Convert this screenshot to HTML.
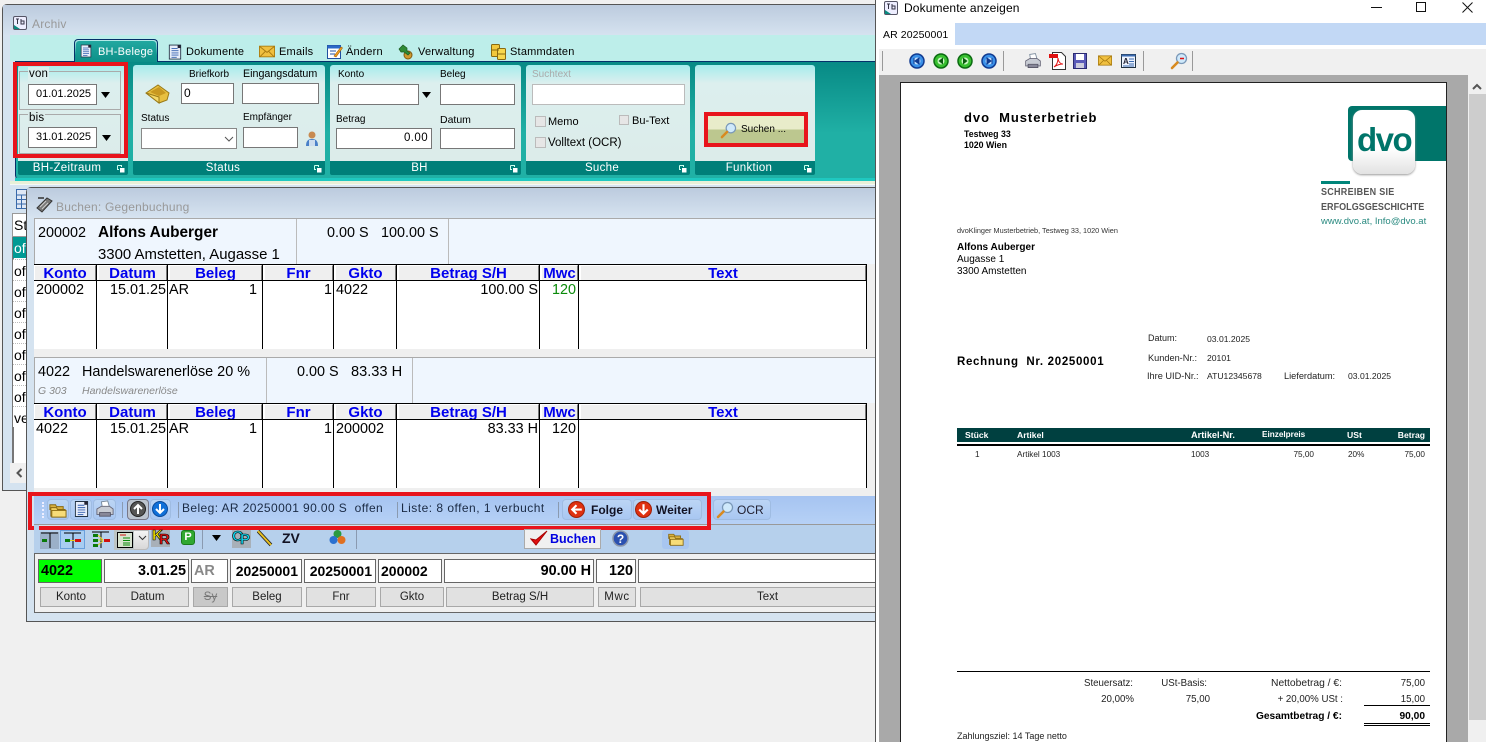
<!DOCTYPE html>
<html lang="de"><head><meta charset="utf-8"><title>Archiv</title>
<style>
html{margin:0;padding:0;background:#f0f0f0;overflow:hidden;width:1486px;height:742px}
body{margin:0;padding:0;background:#f0f0f0}
#root{position:absolute;left:0;top:0;width:1486px;height:742px;overflow:hidden;font-family:"Liberation Sans",sans-serif;color:#000}
div,svg,span.t{position:absolute;box-sizing:border-box}
.t{position:absolute;line-height:14px;white-space:nowrap;font-size:12px}
.g{color:#999}
.in{background:#fff;border:1px solid #777}
.grp{background:linear-gradient(#a6ecec 0,#dcefee 18px,#dcecea 100%);border-radius:3px 3px 0 0}
.ft{background:#007f79;color:#fff;height:14px;text-align:center;font-size:11.5px;line-height:15px;letter-spacing:.3px;border-radius:0 0 2px 2px;padding-right:12px}
.rb{border:4px solid #e8141c;background:transparent}
.hc{background:#efefef;overflow:hidden;color:#0000ee;font-weight:bold;font-size:15px;line-height:15px;text-align:center;border-right:1px solid #777;border-left:1px solid #fff;border-top:1px solid #fff}
.v{background:#000;width:1px;top:0;height:85px}
.c{font-size:14.4px;top:19px;line-height:14px;white-space:nowrap;position:absolute}
.l{background:#e1e1e1;border:1px solid #a8a8a8;text-align:center;font-size:11.5px;line-height:19px;height:20px;top:587px;color:#222}
.e{background:#fff;border:1px solid #666;height:24px;top:559px;font-weight:bold;font-size:14.4px;line-height:22px;white-space:nowrap;padding:0 2px}
.r{text-align:right}
.p{font-size:8.6px;color:#222;line-height:12px}
.f{font-size:9.7px;color:#222;line-height:12px}
.btn{background:linear-gradient(#bcd5f5,#a9c7f2);border:1px solid #9fbce2;border-radius:4px}
.sep{width:1px;background:#f4f8ff;border-left:1px solid #8a9ab0}
.rw{border-top:1px dotted #bbb;left:13px;width:13px;height:21px;font-size:14px;line-height:22px;overflow:hidden;padding-left:1px;background:#fff}
.tab{top:45px;font-size:11px;letter-spacing:.22px}
</style></head><body><div id="root">
<svg width="0" height="0" style="position:absolute"><defs>
<symbol id="app" viewBox="0 0 14 14"><rect x=".5" y=".5" width="13" height="13" rx="1.5" fill="#eef" stroke="#556"/><path d="M1 9 L7 13H1Z" fill="#0a8a80"/><path d="M3 3h3M4.5 3v5M8 3v5h3V5H8" stroke="#334" fill="none"/></symbol>
<symbol id="folder" viewBox="0 0 20 20"><path d="M2 5h6l1 2h7v3H2Z" fill="#d8b040" stroke="#8a6a10"/><path d="M3 8h6l1 2h8v7H3Z" fill="#f0cf60" stroke="#8a6a10"/><path d="M4 11h15v7H4Z" fill="#f7dc78" stroke="#8a6a10"/></symbol>
<symbol id="doc" viewBox="0 0 16 18"><path d="M1.5 1h13v16h-13Z" fill="#e8eefa" stroke="#234"/><path d="M11 1h3.5v3.500H11Z" fill="#223"/><path d="M4 5h7M4 7.500h8M4 10h8M4 12.500h8M4 15h6" stroke="#3460b0"/></symbol>
<symbol id="printer" viewBox="0 0 22 20"><path d="M7 2l7-1 2 7H8Z" fill="#fff" stroke="#789"/><path d="M2 10l5-3h9l4 3v6H2Z" fill="#c8ccd4" stroke="#667"/><path d="M5 14h12v4H5Z" fill="#889" stroke="#556"/></symbol>
<symbol id="mag" viewBox="0 0 18 18"><circle cx="11.500" cy="6.500" r="5" fill="#cfe9fb" stroke="#7a98b8" stroke-width="1.300"/><path d="M7.500 10.500 2 16" stroke="#d88a20" stroke-width="2.600" stroke-linecap="round"/></symbol>
<symbol id="mail" viewBox="0 0 18 14"><rect x=".5" y="1" width="17" height="12" fill="#f0c040" stroke="#a87a10"/><path d="M1 1.500 9 8l8-6.500M1 13l6-6M17 13l-6-6" fill="none" stroke="#a87a10"/></symbol>
<symbol id="dl" viewBox="0 0 8 8"><path d="M.5.500h4v1.500M.5.500v4H2" fill="none" stroke="#cfe"/><rect x="3" y="3" width="4.500" height="4.500" fill="#fff"/></symbol>
</defs></svg>

<!-- Archiv window -->
<div style="left:2px;top:4px;width:874px;height:487px;border:1px solid #555;border-radius:5px 0 0 0;background:#d5e3f0"></div>
<div style="left:3px;top:5px;width:872px;height:31px;background:linear-gradient(#bccbde,#d6e3f0)"></div>
<svg style="left:13px;top:16px" width="14" height="14"><use href="#app"/></svg>
<span class="t g" style="left:32px;top:17px;letter-spacing:.2px">Archiv</span>
<div style="left:10px;top:35px;width:865px;height:26px;background:#bdeeea"></div>
<div style="left:15px;top:61px;width:860px;height:120px;background:linear-gradient(#078a85,#20b0a5 60%);border-top:1px solid #05306a;border-left:1px solid #05306a;border-radius:0 0 0 6px"></div>
<div style="left:15px;top:178px;width:860px;height:3px;background:#1fc8c0"></div>
<div style="left:10px;top:181px;width:865px;height:3px;background:#e8f0d8"></div>
<div style="left:10px;top:184px;width:865px;height:1px;background:#f4f8f4"></div>

<!-- Tabs -->
<div style="left:74px;top:39px;width:84px;height:23px;background:linear-gradient(#b8ecea,#10968f 70%);border:1px solid #05306a;border-bottom:0;border-radius:4px 4px 0 0"></div>
<div style="left:76px;top:41px;width:80px;height:21px;background:linear-gradient(#22a8a0,#0c8f88);border-radius:3px 3px 0 0"></div>
<svg style="left:80px;top:43px" width="12" height="16"><use href="#doc"/></svg>
<span class="t tab" style="left:98px;color:#fff">BH-Belege</span>
<svg style="left:168px;top:44px" width="14" height="16"><use href="#doc"/></svg>
<span class="t tab" style="left:186px">Dokumente</span>
<svg style="left:259px;top:45px" width="16" height="13"><use href="#mail"/></svg>
<span class="t tab" style="left:279px">Emails</span>
<svg style="left:327px;top:44px" width="16" height="15" viewBox="0 0 16 15"><rect x=".5" y="1.500" width="13" height="13" fill="#fff" stroke="#2050a0"/><rect x=".5" y="1.500" width="13" height="3" fill="#2a68c8"/><path d="M3 7h6M3 10h5" stroke="#2050a0"/><path d="M7 12 14 3l1.500 1L9 13Z" fill="#f0a020" stroke="#a05a00" stroke-width=".6"/></svg>
<span class="t tab" style="left:346px">Ändern</span>
<svg style="left:398px;top:44px" width="17" height="16" viewBox="0 0 17 16"><circle cx="10" cy="11" r="4" fill="#d09a30" stroke="#805a10"/><path d="M1 5 5 1l4 3v3l3 2-2 2-4-3H3Z" fill="#2f8a35" stroke="#1a5a20" stroke-width=".7"/></svg>
<span class="t tab" style="left:418px">Verwaltung</span>
<svg style="left:491px;top:44px" width="15" height="16" viewBox="0 0 15 16"><rect x=".5" y=".5" width="8" height="12" rx="1" fill="#f2c83c" stroke="#8a6a10"/><rect x="6.500" y="4.500" width="8" height="11" rx="1" fill="#f8d84c" stroke="#8a6a10"/><path d="M1 6h7M7 10h7" stroke="#8a6a10"/></svg>
<span class="t tab" style="left:510px">Stammdaten</span>

<!-- BH-Zeitraum -->
<div class="grp" style="left:18px;top:65px;width:110px;height:96px"></div>
<div class="ft" style="left:18px;top:161px;width:110px">BH-Zeitraum</div>
<svg style="left:117px;top:165px" width="8" height="8"><use href="#dl"/></svg>
<div style="left:19px;top:71px;width:102px;height:39px;border:1px solid #aaa"></div>
<span class="t" style="left:28px;top:67px;font-size:11.500px;background:#dcefee;padding:0 1px;letter-spacing:.2px">von</span>
<div class="in" style="left:28px;top:84px;width:69px;height:21px"></div>
<span class="t" style="left:36px;top:87px;font-size:11px">01.01.2025</span>
<svg style="left:101px;top:92px" width="9" height="6"><path d="M0 0h9L4.500 6Z"/></svg>
<div style="left:19px;top:114px;width:102px;height:40px;border:1px solid #aaa"></div>
<span class="t" style="left:28px;top:111px;font-size:11.500px;background:#dcecea;padding:0 1px;letter-spacing:.2px">bis</span>
<div class="in" style="left:28px;top:127px;width:69px;height:21px"></div>
<span class="t" style="left:36px;top:130px;font-size:11px">31.01.2025</span>
<svg style="left:102px;top:135px" width="9" height="6"><path d="M0 0h9L4.500 6Z"/></svg>
<div class="rb" style="left:13px;top:62px;width:115px;height:96px"></div>

<!-- Status -->
<div class="grp" style="left:133px;top:65px;width:192px;height:96px"></div>
<div class="ft" style="left:133px;top:161px;width:192px">Status</div>
<svg style="left:314px;top:165px" width="8" height="8"><use href="#dl"/></svg>
<svg style="left:145px;top:84px" width="25" height="20" viewBox="0 0 25 20"><path d="M1 9 13 1l11 8-2 7-8 3Z" fill="#e8c040" stroke="#9a7a18"/><path d="M5 8l9-5 7 6-7 3Z" fill="#c89820"/><path d="M1 9l13 4v6Z" fill="#f4d868" stroke="#9a7a18"/></svg>
<span class="t" style="left:189px;top:68px;font-size:10px">Briefkorb</span>
<div class="in" style="left:181px;top:83px;width:53px;height:21px"></div>
<span class="t" style="left:184px;top:86px;font-size:12px">0</span>
<span class="t" style="left:243px;top:67px;font-size:10.700px">Eingangsdatum</span>
<div class="in" style="left:242px;top:83px;width:77px;height:21px"></div>
<span class="t" style="left:141px;top:112px;font-size:10px">Status</span>
<div class="in" style="left:141px;top:128px;width:96px;height:21px;border-color:#888"></div>
<svg style="left:224px;top:136px" width="10" height="6"><path d="M1 1l4 4 4-4" fill="none" stroke="#555"/></svg>
<span class="t" style="left:243px;top:111px;font-size:10px">Empfänger</span>
<div class="in" style="left:243px;top:127px;width:55px;height:21px"></div>
<svg style="left:305px;top:131px" width="14" height="16" viewBox="0 0 14 16"><circle cx="7" cy="4" r="3.500" fill="#c88a50"/><path d="M1 15c0-5 2-7 6-7s6 2 6 7Z" fill="#4a80c8"/><rect x="4" y="9" width="6" height="6" fill="#cde"/></svg>

<!-- BH -->
<div class="grp" style="left:330px;top:65px;width:191px;height:96px"></div>
<div class="ft" style="left:330px;top:161px;width:191px">BH</div>
<svg style="left:510px;top:165px" width="8" height="8"><use href="#dl"/></svg>
<span class="t" style="left:338px;top:68px;font-size:10px">Konto</span>
<div class="in" style="left:338px;top:84px;width:81px;height:21px"></div>
<svg style="left:422px;top:92px" width="9" height="6"><path d="M0 0h9L4.500 6Z"/></svg>
<span class="t" style="left:336px;top:113px;font-size:10px">Betrag</span>
<div class="in" style="left:336px;top:128px;width:96px;height:21px"></div>
<span class="t" style="right:1058px;top:131px;font-size:11.500px;letter-spacing:.4px">0.00</span>
<span class="t" style="left:440px;top:68px;font-size:10px">Beleg</span>
<div class="in" style="left:440px;top:84px;width:75px;height:21px"></div>
<span class="t" style="left:440px;top:113px;font-size:10.500px">Datum</span>
<div class="in" style="left:440px;top:128px;width:75px;height:21px"></div>

<!-- Suche -->
<div class="grp" style="left:526px;top:65px;width:164px;height:96px"></div>
<div class="ft" style="left:526px;top:161px;width:164px">Suche</div>
<svg style="left:679px;top:165px" width="8" height="8"><use href="#dl"/></svg>
<span class="t" style="left:532px;top:68px;font-size:10px;color:#aaa">Suchtext</span>
<div class="in" style="left:532px;top:84px;width:153px;height:21px;border-color:#bbb"></div>
<div style="left:535px;top:116px;width:11px;height:11px;background:#e6e6e6;border:1px solid #bbb"></div>
<span class="t" style="left:548px;top:115px;font-size:11px">Memo</span>
<div style="left:619px;top:115px;width:10px;height:10px;background:#e6e6e6;border:1px solid #bbb"></div>
<span class="t" style="left:632px;top:114px;font-size:11px">Bu-Text</span>
<div style="left:535px;top:137px;width:11px;height:11px;background:#e6e6e6;border:1px solid #bbb"></div>
<span class="t" style="left:548px;top:136px;font-size:11.500px">Volltext (OCR)</span>

<!-- Funktion -->
<div class="grp" style="left:695px;top:65px;width:120px;height:96px"></div>
<div class="ft" style="left:695px;top:161px;width:120px">Funktion</div>
<svg style="left:804px;top:165px" width="8" height="8"><use href="#dl"/></svg>
<div style="left:708px;top:116px;width:96px;height:27px;background:linear-gradient(#e8ecca 50%,#bcc78f 50%)"></div>
<svg style="left:720px;top:122px" width="17" height="17"><use href="#mag"/></svg>
<span class="t" style="left:741px;top:123px;font-size:10px">Suchen ...</span>
<div class="rb" style="left:704px;top:112px;width:104px;height:35px"></div>

<!-- left list behind -->
<svg style="left:16px;top:189px" width="11" height="20"><rect x=".5" y=".5" width="11" height="19" fill="#dfe8f6" stroke="#3a6aaa"/><path d="M0 6h11M0 10.500h11M0 15h11M5.500 6v14" stroke="#3a6aaa"/></svg>
<div style="left:12px;top:213px;width:15px;height:24px;background:#fff;border:1px solid #999"></div>
<span class="t" style="left:14px;top:218px;font-size:14px">St</span>
<div style="left:12px;top:237px;width:15px;height:226px;background:#fff;border-left:2px solid #777"></div>
<div class="rw" style="top:237px;background:#009a94;color:#fff;border:0">of</div>
<div class="rw" style="top:259px">of</div><div class="rw" style="top:280px">of</div><div class="rw" style="top:301px">of</div><div class="rw" style="top:322px">of</div><div class="rw" style="top:343px">of</div><div class="rw" style="top:364px">of</div><div class="rw" style="top:385px">of</div><div class="rw" style="top:406px">ve</div>
<div style="left:10px;top:463px;width:17px;height:20px;background:#f0f0f0"></div>
<svg style="left:16px;top:468px" width="7" height="10"><path d="M5.500 1 1.500 5l4 4" fill="none" stroke="#555" stroke-width="2"/></svg>

<!-- Buchen window -->
<div style="left:26px;top:187px;width:850px;height:435px;border:1px solid #555;border-radius:5px 0 0 0;background:#d5e3f0"></div>
<div style="left:27px;top:188px;width:848px;height:30px;background:linear-gradient(#bccbde,#d6e3f0)"></div>
<svg style="left:36px;top:196px" width="17" height="17" viewBox="0 0 17 17"><path d="M2 2h6" stroke="#333" stroke-width="1.500"/><path d="M1 12 11 2l5 3L6 16Z" fill="#777" stroke="#333"/><path d="M4 11l6-6M6 13l6-6" stroke="#ccc"/></svg>
<span class="t g" style="left:56px;top:200px;font-size:12px;letter-spacing:.2px">Buchen: Gegenbuchung</span>

<!-- panel 1 -->
<div style="left:34px;top:218px;width:841px;height:46px;background:#eff6fe;border-top:1px solid #aaa"></div>
<div style="left:34px;top:219px;width:1px;height:45px;background:#aaa"></div>
<div style="left:296px;top:219px;width:1px;height:45px;background:#bbb"></div>
<div style="left:448px;top:219px;width:1px;height:45px;background:#bbb"></div>
<span class="t" style="left:38px;top:226px;font-size:14.400px">200002</span>
<span class="t" style="left:98px;top:226px;font-size:15.400px;font-weight:bold">Alfons Auberger</span>
<span class="t" style="left:98px;top:248px;font-size:14.950px">3300 Amstetten, Augasse 1</span>
<span class="t" style="left:327px;top:226px;font-size:14.400px">0.00 S</span>
<span class="t" style="left:381px;top:226px;font-size:14.400px">100.00 S</span>
<div style="left:34px;top:349px;width:841px;height:9px;background:#efefef;border-bottom:1px solid #aaa"></div>
<div style="left:866px;top:264px;width:9px;height:85px;background:#efefef"></div>

<!-- table 1 -->
<div style="left:34px;top:264px;width:833px;height:85px;background:#fff">
<div style="left:0;top:0;width:833px;height:1px;background:#000"></div>
<div style="left:0;top:16px;width:833px;height:1px;background:#000"></div>
<div class="hc" style="left:0;top:1px;width:62px;height:15px">Konto</div>
<div class="hc" style="left:64px;top:1px;width:69px;height:15px">Datum</div>
<div class="hc" style="left:135px;top:1px;width:93px;height:15px">Beleg</div>
<div class="hc" style="left:230px;top:1px;width:69px;height:15px">Fnr</div>
<div class="hc" style="left:301px;top:1px;width:61px;height:15px">Gkto</div>
<div class="hc" style="left:364px;top:1px;width:141px;height:15px">Betrag S/H</div>
<div class="hc" style="left:507px;top:1px;width:37px;height:15px">Mwc</div>
<div class="hc" style="left:546px;top:1px;width:286px;height:15px">Text</div>
<div class="v" style="left:62px"></div><div class="v" style="left:133px"></div><div class="v" style="left:228px"></div><div class="v" style="left:299px"></div><div class="v" style="left:362px"></div><div class="v" style="left:505px"></div><div class="v" style="left:544px"></div><div class="v" style="left:832px"></div>
<span class="c" style="left:2px">200002</span><span class="c" style="left:76px">15.01.25</span><span class="c" style="left:135px">AR</span><span class="c" style="right:610px">1</span><span class="c" style="right:535px">1</span><span class="c" style="left:302px">4022</span><span class="c" style="right:329px">100.00 S</span><span class="c" style="right:291px;color:#0a8a0a">120</span>
</div>

<!-- panel 2 -->
<div style="left:34px;top:358px;width:841px;height:45px;background:#eff6fe"></div>
<div style="left:34px;top:358px;width:1px;height:45px;background:#aaa"></div>
<div style="left:266px;top:358px;width:1px;height:45px;background:#bbb"></div>
<div style="left:412px;top:358px;width:1px;height:45px;background:#bbb"></div>
<span class="t" style="left:38px;top:365px;font-size:14.400px">4022</span>
<span class="t" style="left:82px;top:365px;font-size:14.400px">Handelswarenerlöse 20 %</span>
<span class="t" style="left:297px;top:365px;font-size:14.400px">0.00 S</span>
<span class="t" style="left:351px;top:365px;font-size:14.600px">83.33 H</span>
<span class="t" style="left:38px;top:384px;font-size:10.500px;font-style:italic;color:#888">G 303</span>
<span class="t" style="left:82px;top:384px;font-size:10.500px;font-style:italic;color:#888">Handelswarenerlöse</span>
<div style="left:866px;top:403px;width:9px;height:94px;background:#efefef"></div>
<div style="left:34px;top:488px;width:841px;height:9px;background:#efefef"></div>

<!-- table 2 -->
<div style="left:34px;top:403px;width:833px;height:85px;background:#fff">
<div style="left:0;top:0;width:833px;height:1px;background:#000"></div>
<div style="left:0;top:16px;width:833px;height:1px;background:#000"></div>
<div class="hc" style="left:0;top:1px;width:62px;height:15px">Konto</div>
<div class="hc" style="left:64px;top:1px;width:69px;height:15px">Datum</div>
<div class="hc" style="left:135px;top:1px;width:93px;height:15px">Beleg</div>
<div class="hc" style="left:230px;top:1px;width:69px;height:15px">Fnr</div>
<div class="hc" style="left:301px;top:1px;width:61px;height:15px">Gkto</div>
<div class="hc" style="left:364px;top:1px;width:141px;height:15px">Betrag S/H</div>
<div class="hc" style="left:507px;top:1px;width:37px;height:15px">Mwc</div>
<div class="hc" style="left:546px;top:1px;width:286px;height:15px">Text</div>
<div class="v" style="left:62px"></div><div class="v" style="left:133px"></div><div class="v" style="left:228px"></div><div class="v" style="left:299px"></div><div class="v" style="left:362px"></div><div class="v" style="left:505px"></div><div class="v" style="left:544px"></div><div class="v" style="left:832px"></div>
<span class="c" style="left:2px">4022</span><span class="c" style="left:76px">15.01.25</span><span class="c" style="left:135px">AR</span><span class="c" style="right:610px">1</span><span class="c" style="right:535px">1</span><span class="c" style="left:302px">200002</span><span class="c" style="right:329px">83.33 H</span><span class="c" style="right:291px">120</span>
</div>

<!-- toolbar 1 -->
<div style="left:34px;top:496px;width:841px;height:29px;background:linear-gradient(#a6c4f1,#b6d1f6);border-bottom:1px solid #999"></div>
<div style="left:42px;top:502px;width:2px;height:16px;border-left:2px dotted #eef"></div>
<div class="btn" style="left:47px;top:499px;width:22px;height:21px"></div>
<svg style="left:48px;top:500px" width="19" height="19"><use href="#folder"/></svg>
<div class="btn" style="left:70px;top:499px;width:22px;height:21px"></div>
<svg style="left:74px;top:500px" width="15" height="18"><use href="#doc"/></svg>
<div class="btn" style="left:93px;top:499px;width:23px;height:21px"></div>
<svg style="left:95px;top:500px" width="20" height="18"><use href="#printer"/></svg>
<div class="sep" style="left:122px;top:502px;height:16px"></div>
<div style="left:127px;top:499px;width:22px;height:21px;background:#bcc4cf;border:1px solid #778;border-radius:4px"></div>
<svg style="left:130px;top:501px" width="16" height="16" viewBox="0 0 16 16"><circle cx="8" cy="8" r="7.500" fill="#555" stroke="#222"/><path d="M8 13V4M4 8l4-4 4 4" stroke="#fff" stroke-width="2" fill="none"/></svg>
<div class="btn" style="left:150px;top:499px;width:21px;height:21px"></div>
<svg style="left:152px;top:501px" width="16" height="16" viewBox="0 0 16 16"><circle cx="8" cy="8" r="7.500" fill="#1070d8" stroke="#0a4a9a"/><path d="M8 3v9M4 8l4 4 4-4" stroke="#fff" stroke-width="2" fill="none"/></svg>
<div class="sep" style="left:178px;top:502px;height:16px"></div>
<span class="t" style="left:182px;top:501px;color:#1a2a44;letter-spacing:.4px;white-space:pre">Beleg: AR 20250001 90.00 S  offen</span>
<div class="sep" style="left:397px;top:502px;height:16px"></div>
<span class="t" style="left:401px;top:501px;color:#1a2a44;letter-spacing:.48px">Liste: 8 offen, 1 verbucht</span>
<div class="sep" style="left:558px;top:502px;height:16px"></div>
<div class="btn" style="left:562px;top:499px;width:70px;height:21px"></div>
<svg style="left:568px;top:501px" width="17" height="17" viewBox="0 0 16 16"><circle cx="8" cy="8" r="7.500" fill="#e03010" stroke="#a02008"/><path d="M13 8H4M8 4 4 8l4 4" stroke="#fff" stroke-width="2" fill="none"/></svg>
<span class="t" style="left:591px;top:503px;font-weight:bold;color:#112">Folge</span>
<div class="btn" style="left:633px;top:499px;width:69px;height:21px"></div>
<svg style="left:635px;top:501px" width="17" height="17" viewBox="0 0 16 16"><circle cx="8" cy="8" r="7.500" fill="#e03010" stroke="#a02008"/><path d="M8 3v9M4 8l4 4 4-4" stroke="#fff" stroke-width="2" fill="none"/></svg>
<span class="t" style="left:656px;top:503px;font-weight:bold;color:#112">Weiter</span>
<div class="btn" style="left:713px;top:499px;width:58px;height:21px"></div>
<svg style="left:716px;top:501px" width="18" height="18"><use href="#mag"/></svg>
<span class="t" style="left:737px;top:503px;color:#223">OCR</span>
<div class="rb" style="left:28px;top:492px;width:683px;height:38px"></div>

<!-- toolbar 2 -->
<div style="left:34px;top:530px;width:841px;height:23px;background:#b6d0ec"></div>
<div style="left:34px;top:525px;width:5px;height:5px;background:#b6d0ec"></div>
<div style="left:711px;top:525px;width:164px;height:5px;background:#b6d0ec"></div>
<div style="left:40px;top:532px;width:19px;height:17px;background:#9bb0c8"></div>
<svg style="left:40px;top:532px" width="19" height="17"><path d="M1 1h17M10 1v15" stroke="#000" fill="none"/><rect x="2" y="7" width="5" height="3" fill="#0a7a0a"/></svg>
<div style="left:60px;top:530px;width:25px;height:19px;background:#a8cdf2;border:1px solid #6aa0dc"></div>
<svg style="left:64px;top:532px" width="19" height="16"><path d="M0 1h17M9 1v15" stroke="#000" fill="none"/><rect x="1" y="7" width="5" height="3" fill="#0a7a0a"/><rect x="11" y="7" width="6" height="3" fill="#d01010"/><path d="M6 8.500h5" stroke="#e8d020"/></svg>
<svg style="left:92px;top:531px" width="18" height="18"><path d="M0 1h17M9 1v16" stroke="#000" fill="none"/><rect x="1" y="3" width="5" height="3" fill="#0a7a0a"/><rect x="1" y="8" width="5" height="3" fill="#0a7a0a"/><rect x="1" y="13" width="5" height="3" fill="#0a7a0a"/><rect x="12" y="8" width="6" height="3" fill="#d01010"/><path d="M6 4 11 9M6 9h5M6 14l5-4" stroke="#e8d020"/></svg>
<div style="left:114px;top:530px;width:35px;height:20px;background:linear-gradient(#f4f4f4,#d8d8d8);border:1px solid #bbb;border-radius:0 0 4px 4px"></div>
<div style="left:114px;top:530px;width:20px;height:20px;background:#bcc4c4"></div>
<svg style="left:117px;top:532px" width="16" height="16"><rect x=".5" y=".5" width="15" height="15" fill="#d8e4d0" stroke="#000"/><path d="M3 3h6" stroke="#d01010"/><path d="M6 6h7M6 8.500h7M6 11h7M6 13h7" stroke="#0a8a0a"/></svg>
<svg style="left:138px;top:535px" width="9" height="6"><path d="M1 1l3.500 3.500L8 1" fill="none" stroke="#333"/></svg>
<div style="left:151px;top:530px;width:19px;height:17px;background:#a8b0b8"></div>
<span class="t" style="left:152px;top:529px;font-size:15px;font-weight:bold;color:#f8e800;-webkit-text-stroke:.6px #000">K</span>
<span class="t" style="left:159px;top:533px;font-size:15px;font-weight:bold;color:#e81010;-webkit-text-stroke:.6px #000">R</span>
<div style="left:181px;top:530px;width:14px;height:15px;background:#30a830;border:1px solid #1a7a1a;border-radius:3px;color:#fff;font-weight:bold;font-size:11px;text-align:center;line-height:13px">P</div>
<div class="sep" style="left:202px;top:530px;height:19px"></div>
<svg style="left:212px;top:535px" width="9" height="6"><path d="M0 0h9L4.500 6Z"/></svg>
<div style="left:232px;top:530px;width:19px;height:18px;background:#a8b0b8"></div>
<span class="t" style="left:232px;top:530px;font-size:15px;font-weight:bold;color:#10d8f0;-webkit-text-stroke:.6px #000">O</span>
<span class="t" style="left:240px;top:533px;font-size:15px;font-weight:bold;color:#10d8f0;-webkit-text-stroke:.6px #000">P</span>
<svg style="left:257px;top:530px" width="17" height="18"><path d="M1 1l13 14" stroke="#222" stroke-width="3.500"/><path d="M1 1l13 14" stroke="#e8c020" stroke-width="2"/></svg>
<span class="t" style="left:282px;top:531px;font-size:14px;font-weight:bold;color:#112">ZV</span>
<svg style="left:329px;top:529px" width="17" height="17"><circle cx="8.500" cy="5" r="4" fill="#2a9a40"/><circle cx="4.500" cy="11" r="4" fill="#2a70d0"/><circle cx="12.500" cy="11" r="4" fill="#e07020"/></svg>
<div class="sep" style="left:356px;top:530px;height:19px"></div>
<div style="left:524px;top:529px;width:77px;height:20px;background:#f0f0f0;border:1px solid #aaa"></div>
<svg style="left:530px;top:530px" width="18" height="16"><path d="M1 9l5 6L17 1 6 10Z" fill="#e01010" stroke="#a00"/></svg>
<span class="t" style="left:550px;top:532px;font-size:12.500px;font-weight:bold;color:#0000e0">Buchen</span>
<svg style="left:612px;top:530px" width="17" height="17"><circle cx="8.500" cy="8.500" r="7.500" fill="#2a50b0" stroke="#8a95a8" stroke-width="1.500"/><text x="8.500" y="13" text-anchor="middle" font-size="12" font-weight="bold" fill="#fff" font-family="Liberation Sans">?</text></svg>
<div style="left:662px;top:530px;width:27px;height:19px;background:#a8c6f0;border-radius:3px"></div>
<svg style="left:666px;top:530px" width="19" height="17"><use href="#folder"/></svg>

<!-- entry -->
<div style="left:34px;top:553px;width:841px;height:60px;background:#f0f0f0;border-top:1px solid #666;border-bottom:1px solid #666;border-left:1px solid #666"></div>
<div class="e" style="left:38px;width:64px;background:#00ff00">4022</div>
<div class="e r" style="left:104px;width:85px">3.01.25</div>
<div class="e" style="left:191px;width:37px;color:#888">AR</div>
<div class="e r" style="left:230px;width:72px;font-size:14px;padding-right:3px">20250001</div>
<div class="e r" style="left:304px;width:72px;font-size:14px;padding-right:3px">20250001</div>
<div class="e" style="left:378px;width:64px;font-size:14px">200002</div>
<div class="e r" style="left:444px;width:150px">90.00 H</div>
<div class="e r" style="left:596px;width:40px">120</div>
<div class="e" style="left:638px;width:237px;border-right:0"></div>
<div class="l" style="left:40px;width:62px">Konto</div>
<div class="l" style="left:106px;width:83px">Datum</div>
<div class="l" style="left:193px;width:35px;background:#c8c8c8;color:#777;text-decoration:line-through">Sy</div>
<div class="l" style="left:232px;width:70px">Beleg</div>
<div class="l" style="left:306px;width:70px">Fnr</div>
<div class="l" style="left:380px;width:64px">Gkto</div>
<div class="l" style="left:446px;width:148px">Betrag S/H</div>
<div class="l" style="left:598px;width:38px;letter-spacing:.6px">Mwc</div>
<div class="l" style="left:640px;width:254px;border-right:0">Text</div>

<!-- Doc window -->
<div style="left:875px;top:0;width:611px;height:742px;background:#fff;border-left:1px solid #555"></div>
<svg style="left:884px;top:1px" width="14" height="14"><use href="#app"/></svg>
<span class="t" style="left:904px;top:1px;font-size:12px;letter-spacing:.12px">Dokumente anzeigen</span>
<div style="left:1371px;top:7px;width:11px;height:1px;background:#111"></div>
<div style="left:1416px;top:2px;width:10px;height:10px;border:1px solid #111"></div>
<svg style="left:1462px;top:2px" width="11" height="11"><path d="M.5.500l10 10M10.500.500l-10 10" stroke="#111" fill="none"/></svg>
<div style="left:876px;top:23px;width:610px;height:22px;background:#c2d8f5"></div>
<div style="left:876px;top:23px;width:79px;height:22px;background:#fff"></div>
<span class="t" style="left:883px;top:28px;font-size:10.500px;letter-spacing:.1px">AR 20250001</span>
<div style="left:879px;top:49px;width:607px;height:26px;background:#f0f0f0"></div>
<div style="left:882px;top:51px;width:1px;height:20px;background:#999"></div>
<div style="left:1003px;top:51px;width:1px;height:20px;background:#999"></div>
<div style="left:1143px;top:51px;width:1px;height:20px;background:#999"></div>
<div style="left:1192px;top:51px;width:1px;height:20px;background:#999"></div>
<svg style="left:909px;top:53px" width="16" height="16" viewBox="0 0 16 16"><circle cx="8" cy="8" r="7" fill="#3a90e8" stroke="#103a90" stroke-width="1.500"/><circle cx="8" cy="8" r="3.500" fill="#bfe0ff"/><path d="M10 5 6 8l4 3ZM5 5v6" fill="#103a90" stroke="#103a90"/></svg>
<svg style="left:933px;top:53px" width="16" height="16" viewBox="0 0 16 16"><circle cx="8" cy="8" r="7" fill="#38c030" stroke="#0a6a10" stroke-width="1.500"/><circle cx="8" cy="8" r="3.500" fill="#c8f5c0"/><path d="M10 4.500 5.500 8l4.500 3.500Z" fill="#0a5a10"/></svg>
<svg style="left:957px;top:53px" width="16" height="16" viewBox="0 0 16 16"><circle cx="8" cy="8" r="7" fill="#38c030" stroke="#0a6a10" stroke-width="1.500"/><circle cx="8" cy="8" r="3.500" fill="#c8f5c0"/><path d="M6 4.500 10.500 8 6 11.500Z" fill="#0a5a10"/></svg>
<svg style="left:981px;top:53px" width="16" height="16" viewBox="0 0 16 16"><circle cx="8" cy="8" r="7" fill="#3a90e8" stroke="#103a90" stroke-width="1.500"/><circle cx="8" cy="8" r="3.500" fill="#bfe0ff"/><path d="M6 5l4 3-4 3ZM11 5v6" fill="#103a90" stroke="#103a90"/></svg>
<svg style="left:1024px;top:52px" width="18" height="18"><use href="#printer"/></svg>
<svg style="left:1049px;top:52px" width="17" height="18" viewBox="0 0 17 18"><path d="M3.500.500h9l4 4v13h-13Z" fill="#fff" stroke="#333"/><rect y="2" width="9" height="4" fill="#e01010"/><path d="M5 15c3-2 4-6 4-9 0 3 2 6 5 6-3 0-6 1-9 3Z" fill="none" stroke="#e01010"/></svg>
<svg style="left:1073px;top:53px" width="14" height="16" viewBox="0 0 14 16"><path d="M.5.500h13v15H.5Z" fill="#5a5ab8" stroke="#2a2a70"/><rect x="3" y="1" width="8" height="6" fill="#fff"/><rect x="3" y="10" width="8" height="5" fill="#ccd"/></svg>
<svg style="left:1098px;top:55px" width="14" height="11"><use href="#mail"/></svg>
<svg style="left:1121px;top:54px" width="15" height="14" viewBox="0 0 15 14"><rect x=".5" y=".5" width="14" height="13" fill="#eef4ff" stroke="#234"/><rect x=".5" y=".5" width="14" height="2" fill="#3a6ab0"/><text x="2" y="10" font-size="8" font-weight="bold" fill="#223" font-family="Liberation Sans">A</text><path d="M8 5h5M8 7.500h5M8 10h5M2 12h11" stroke="#3a6ab0"/></svg>
<svg style="left:1170px;top:52px" width="18" height="18"><use href="#mag"/><path d="M10 6.500h4" stroke="#e01010" stroke-width="1.500"/></svg>

<div style="left:879px;top:75px;width:589px;height:667px;background:#a9a9a9"></div>
<div style="left:1468px;top:75px;width:18px;height:667px;background:#f0f0f0"></div>
<div style="left:1469px;top:94px;width:17px;height:626px;background:#cdcdcd"></div>
<svg style="left:1472px;top:83px" width="10" height="7"><path d="M1 6l4-4 4 4" fill="none" stroke="#555" stroke-width="2"/></svg>

<!-- invoice page -->
<div style="left:900px;top:82px;width:547px;height:660px;background:#fff;border:1px solid #222;border-bottom:0"></div>
<span class="t" style="left:964px;top:111px;font-size:13px;font-weight:bold;letter-spacing:.95px;white-space:pre">dvo  Musterbetrieb</span>
<span class="t" style="left:964px;top:127px;font-size:8.800px;font-weight:bold">Testweg 33</span>
<span class="t" style="left:964px;top:138px;font-size:8.800px;font-weight:bold">1020 Wien</span>
<div style="left:1348px;top:106px;width:98px;height:55px;background:#00756a;border-radius:4px 0 0 4px"></div>
<div style="left:1353px;top:110px;width:62px;height:64px;background:linear-gradient(#fff 60%,#e2e2e2);border-radius:9px;box-shadow:0 1px 2px #999"></div>
<span class="t" style="left:1357px;top:125px;font-size:33px;line-height:30px;font-weight:bold;color:#00756a;letter-spacing:-1.500px">dvo</span>
<div style="left:1321px;top:181px;width:29px;height:3px;background:#00857a"></div>
<span class="t" style="left:1321px;top:186px;font-size:10px;color:#555;font-weight:bold;letter-spacing:.3px;transform:scaleX(.9);transform-origin:left">SCHREIBEN SIE</span>
<span class="t" style="left:1321px;top:201px;font-size:10px;color:#555;font-weight:bold;letter-spacing:.05px;transform:scaleX(.9);transform-origin:left">ERFOLGSGESCHICHTE</span>
<span class="t" style="left:1321px;top:215px;font-size:9.500px;color:#2a8a80">www.dvo.at, Info@dvo.at</span>
<span class="t" style="left:957px;top:224px;font-size:7.300px;color:#333">dvoKlinger Musterbetrieb, Testweg 33, 1020 Wien</span>
<span class="t" style="left:957px;top:241px;font-size:10px;font-weight:bold">Alfons Auberger</span>
<span class="t" style="left:957px;top:253px;font-size:10px">Augasse 1</span>
<span class="t" style="left:957px;top:265px;font-size:10px">3300 Amstetten</span>
<span class="t" style="left:957px;top:355px;font-size:11.500px;font-weight:bold;letter-spacing:.68px;white-space:pre">Rechnung  Nr. 20250001</span>
<span class="t p" style="left:1148px;top:332px;font-size:9px">Datum:</span><span class="t p" style="left:1207px;top:333px">03.01.2025</span>
<span class="t p" style="left:1148px;top:352px;font-size:9.200px">Kunden-Nr.:</span><span class="t p" style="left:1207px;top:352px">20101</span>
<span class="t p" style="left:1147px;top:370px;font-size:9.200px">Ihre UID-Nr.:</span><span class="t p" style="left:1207px;top:370px">ATU12345678</span><span class="t p" style="left:1284px;top:370px;font-size:9.200px">Lieferdatum:</span><span class="t p" style="left:1348px;top:370px">03.01.2025</span>
<div style="left:957px;top:428px;width:473px;height:14px;background:#004040"></div>
<div style="left:957px;top:444px;width:473px;height:1.500px;background:#000"></div>
<span class="t p" style="left:965px;top:429px;color:#fff;font-weight:bold">Stück</span>
<span class="t p" style="left:1017px;top:429px;color:#fff;font-weight:bold">Artikel</span>
<span class="t p" style="left:1191px;top:429px;color:#fff;font-weight:bold;font-size:9.200px">Artikel-Nr.</span>
<span class="t p" style="left:1262px;top:429px;color:#fff;font-weight:bold;font-size:8.200px">Einzelpreis</span>
<span class="t p" style="left:1347px;top:429px;color:#fff;font-weight:bold">USt</span>
<span class="t p" style="right:61px;top:429px;color:#fff;font-weight:bold">Betrag</span>
<span class="t p" style="left:975px;top:449px;font-size:8.200px">1</span><span class="t p" style="left:1017px;top:449px;font-size:8.200px">Artikel 1003</span><span class="t p" style="left:1191px;top:449px;font-size:8.200px">1003</span><span class="t p" style="right:172px;top:449px;font-size:8.200px">75,00</span><span class="t p" style="left:1348px;top:449px;font-size:8.200px">20%</span><span class="t p" style="right:61px;top:449px;font-size:8.200px">75,00</span>
<div style="left:957px;top:671px;width:473px;height:1px;background:#000"></div>
<span class="t f" style="right:353px;top:678px">Steuersatz:</span><span class="t f" style="right:279px;top:678px">USt-Basis:</span><span class="t f" style="right:144px;top:678px;font-size:10.300px">Nettobetrag / €:</span><span class="t f" style="right:61px;top:678px">75,00</span>
<span class="t f" style="right:352px;top:694px">20,00%</span><span class="t f" style="right:276px;top:694px">75,00</span><span class="t f" style="right:143px;top:694px">+ 20,00% USt :</span><span class="t f" style="right:61px;top:694px">15,00</span>
<div style="left:1364px;top:705px;width:66px;height:1px;background:#000"></div>
<span class="t f" style="right:144px;top:711px;font-weight:bold;color:#000;font-size:10.200px">Gesamtbetrag / €:</span><span class="t f" style="right:61px;top:711px;font-weight:bold;color:#000;font-size:10.200px">90,00</span>
<div style="left:1364px;top:723px;width:66px;height:1px;background:#000"></div>
<div style="left:1364px;top:725px;width:66px;height:1px;background:#000"></div>
<span class="t p" style="left:957px;top:730px;font-size:9px">Zahlungsziel: 14 Tage netto</span>
</div></body></html>
